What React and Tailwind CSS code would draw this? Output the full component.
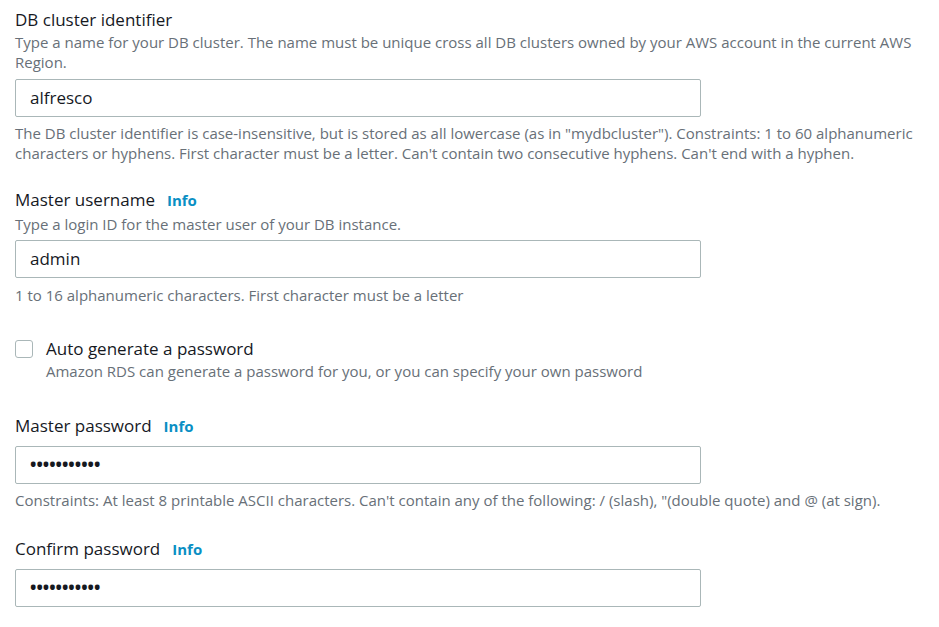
import React from "react";

const font = { fontFamily: '"Open Sans", "Noto Sans", sans-serif' };

function Title({ children, info, className = "" }) {
  return (
    <div className={`flex items-center h-6 ${className}`}>
      <span className="text-[17px] leading-6 text-[#16191f]">{children}</span>
      {info && <span className="ml-[12px] text-[15px] font-bold leading-6 text-[#0a8fc4]">Info</span>}
    </div>
  );
}

function Input({ value, className = "", password = false }) {
  return (
    <div
      className={`w-[686px] h-[38px] border border-[#aab7b8] rounded-[2px] flex items-center pl-[14px] text-[#16191f] ${
        password ? "text-[17px] font-bold" : "text-[17px]"
      } ${className}`}
    >
      {value}
    </div>
  );
}

function Help({ children, className = "" }) {
  return <p className={`text-[15px] leading-5 text-[#687078] ${className}`}>{children}</p>;
}

export default function App() {
  return (
    <div style={font} className="w-[939px] h-[627px] bg-white pl-[15px] pr-4 pt-2 overflow-hidden">
      <Title>DB cluster identifier</Title>
      <Help>
        Type a name for your DB cluster. The name must be unique cross all DB clusters owned by your AWS account in the current AWS Region.
      </Help>
      <Input value="alfresco" className="mt-[7px]" />
      <Help className="mt-[6px]">
        The DB cluster identifier is case-insensitive, but is stored as all lowercase (as in "mydbcluster"). Constraints: 1 to 60 alphanumeric characters or hyphens. First character must be a letter. Can't contain two consecutive hyphens. Can't end with a hyphen.
      </Help>

      <Title info className="mt-[25px]">Master username</Title>
      <Help className="mt-[2px]">Type a login ID for the master user of your DB instance.</Help>
      <Input value="admin" className="mt-[6px]" />
      <Help className="mt-[7px]">1 to 16 alphanumeric characters. First character must be a letter</Help>

      <div className="mt-[32px] flex items-start">
        <div className="mt-[3px] w-[18px] h-[18px] border border-[#aab7b8] rounded-[3px] bg-white shrink-0" />
        <div className="ml-[13px]">
          <div className="text-[17px] leading-6 text-[#16191f]">Auto generate a password</div>
          <Help>Amazon RDS can generate a password for you, or you can specify your own password</Help>
        </div>
      </div>

      <Title info className="mt-[33px]">Master password</Title>
      <Input value="•••••••••••" password className="mt-[8px]" />
      <Help className="mt-[6px]">
        Constraints: At least 8 printable ASCII characters. Can't contain any of the following: / (slash), "(double quote) and @ (at sign).
      </Help>

      <Title info className="mt-[27px]">Confirm password</Title>
      <Input value="•••••••••••" password className="mt-[8px]" />
    </div>
  );
}
